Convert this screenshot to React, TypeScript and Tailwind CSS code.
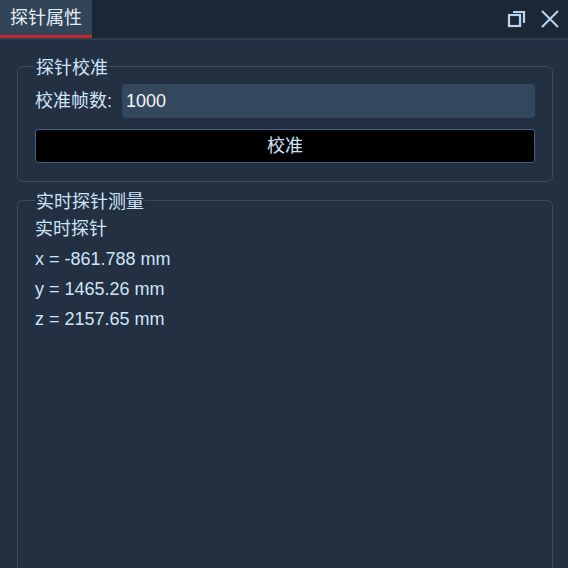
import React from "react";

const font = { fontFamily: '"Liberation Sans", "Noto Sans CJK SC", sans-serif' };

function GroupBox({ title, className, children }: { title: string; className?: string; children: React.ReactNode }) {
  return (
    <fieldset className={`border border-[#3a4b5f] rounded-[6px] px-[17px] pt-0 ${className ?? ""}`}>
      <legend className="px-[1px] ml-0 pt-[4px] leading-[22px] text-[18px] text-[#d0e4f8]">{title}</legend>
      {children}
    </fieldset>
  );
}

export default function App() {
  return (
    <div className="w-[568px] h-[568px] overflow-hidden bg-[#223041] flex flex-col" style={font}>
      <div className="h-[40px] shrink-0 bg-[#1c2735] flex items-stretch border-b-2 border-[#2f3d4d]">
        <div className="w-[92px] bg-[#324457] border-b-[3px] border-[#c1272d] flex items-center pl-[10px] pt-[2px] text-[18px] text-[#e6f0fa]">
          探针属性
        </div>
        <div className="flex-1" />
        <div className="flex items-center gap-[13px] pr-[8px]">
          <svg width="20" height="20" viewBox="0 0 20 20" fill="none" stroke="#b9d4ef" strokeWidth="2.2">
            <rect x="2" y="6" width="11" height="11" />
            <path d="M6 3 H17 V14" />
          </svg>
          <svg width="20" height="20" viewBox="0 0 20 20" fill="none" stroke="#b9d4ef" strokeWidth="2">
            <path d="M2 2 L18 18 M18 2 L2 18" />
          </svg>
        </div>
      </div>
      <div className="flex-1 flex flex-col pl-[17px] pr-[15px] pt-[13px] gap-[5px]">
        <GroupBox title="探针校准" className="pb-[18px]">
          <div className="flex items-center mt-[5px] h-[34px]">
            <span className="w-[87px] text-[18px] text-[#d0e4f8]">校准帧数:</span>
            <div className="flex-1 h-[34px] bg-[#34485d] rounded-[4px] flex items-center px-[4px] text-[18px] text-[#f2f6fa]">
              1000
            </div>
          </div>
          <button className="mt-[11px] w-full h-[34px] bg-black border border-[#3f5d80] rounded-[3px] text-[18px] text-[#d0e4f8]">
            校准
          </button>
        </GroupBox>
        <GroupBox title="实时探针测量" className="flex-1 mb-[-20px]">
          <div className="flex flex-col text-[18px] text-[#d0e4f8] leading-[30px] mt-[1px]">
            <span>实时探针</span>
            <span>x = -861.788 mm</span>
            <span>y = 1465.26 mm</span>
            <span>z = 2157.65 mm</span>
          </div>
        </GroupBox>
      </div>
    </div>
  );
}
